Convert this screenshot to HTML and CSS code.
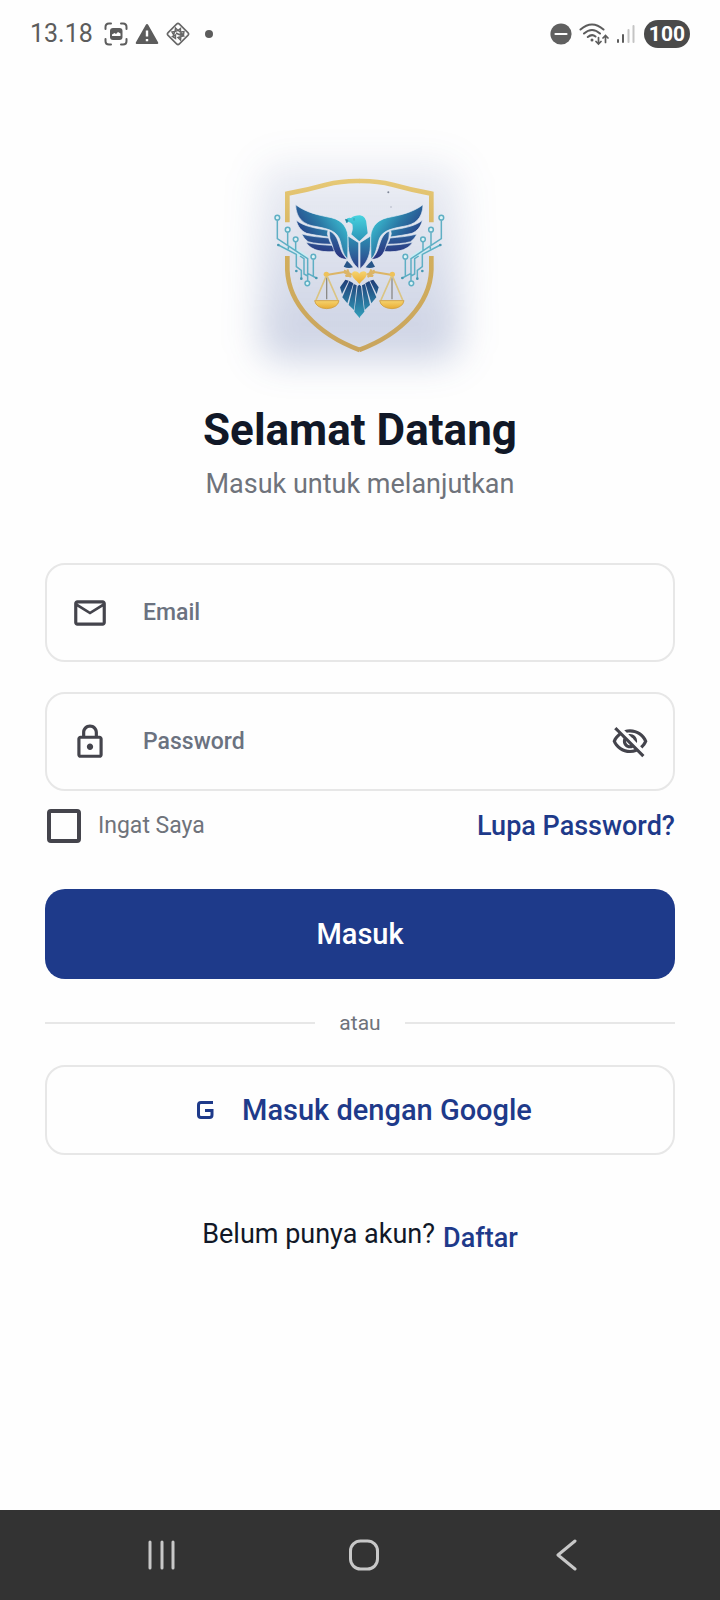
FILE: index.html
```html
<!DOCTYPE html>
<html lang="id">
<head>
<meta charset="utf-8">
<meta name="viewport" content="width=device-width, initial-scale=1">
<title>Masuk</title>
<link rel="stylesheet" href="styles.css">
</head>
<body>
<div class="screen">
  <header class="status">
    <div class="status-left">
      <span class="clock">13.18</span>
      <svg viewBox="0 0 24 24" width="24" height="24" fill="none" stroke="#5c5c5c" stroke-width="2" stroke-linecap="round"><path d="M1.500 7V5Q1.500 1.500 5 1.500H7M17 1.500H19Q22.500 1.500 22.500 5V7M22.500 17V19Q22.500 22.500 19 22.500H17M7 22.500H5Q1.500 22.500 1.500 19V17"/><rect x="6" y="6" width="12.500" height="12" rx="3" fill="#5c5c5c" stroke="none"/><path d="M8 14V12.500L10.500 11L12 12L14 10L16.500 11.500V14Z" fill="#fff" stroke="none"/></svg>
      <svg viewBox="0 0 24 24" width="24" height="24"><path d="M12 2Q12.800 2 13.300 3L23.200 20.500Q23.700 22 22 22H2Q.3 22 .8 20.500L10.700 3Q11.200 2 12 2Z" fill="#5c5c5c"/><path d="M12 8.500V14.500M12 17V19.200" stroke="#fff" stroke-width="2.400"/></svg>
      <svg viewBox="0 0 24 24" width="24" height="24" fill="none" stroke="#666"><rect x="4" y="4" width="16" height="16" rx="2" transform="rotate(45 12 12)" stroke-width="1.600"/><path d="M9.500 6L12 8.500L9 9.500ZM14.500 6.500V10L12 8.500ZM6 10L9 9.500L7.500 12.500ZM18 9.500L17.500 13L14.500 10ZM6.500 14.500L9.500 13L9.500 16.500ZM12 15.500L15 14.500L14.500 18ZM17.500 14L15 14.500L14.500 12ZM10 11L14 13" stroke-width="1.400"/></svg>
      <span class="dot"></span>
    </div>
    <div class="status-right">
      <svg viewBox="0 0 22 22" width="22" height="22"><circle cx="11" cy="11" r="10.600" fill="#606060"/><path d="M5.500 11H16.500" stroke="#fff" stroke-width="2.200" stroke-linecap="round"/></svg>
      <svg viewBox="0 0 30 24" width="30" height="24" fill="none" stroke="#5c5c5c" stroke-width="2" stroke-linecap="round"><path d="M1.500 7.500Q13 -2.500 24.500 7.500M5 11.500Q13 4.500 21 11.500M8.800 15Q13 11.500 16.500 14.500"/><circle cx="13" cy="18" r="1.500" fill="#5c5c5c" stroke="none"/><path d="M19.500 15.500V21.500M17 19.500L19.500 22L22 19.500M26.500 20.500V14M24 16L26.500 13.500L29 16" stroke-width="1.700"/></svg>
      <svg viewBox="0 0 19 20" width="19" height="20" stroke-width="2" stroke-linecap="round"><path d="M2 16V18M7 11V18" stroke="#5c5c5c"/><path d="M12.500 6V18M17.500 2V18" stroke="#c4c4c4"/></svg>
      <span class="battery">100</span>
    </div>
  </header>

  <main class="content">
    <svg class="logo" viewBox="0 0 840 780" role="img" aria-label="Logo">
      <defs>
        <filter id="soft" x="-50%" y="-50%" width="200%" height="200%" color-interpolation-filters="sRGB"><feGaussianBlur stdDeviation="56"/></filter>
        <linearGradient id="glow" x1="0" y1="0" x2="0" y2="1"><stop offset="0" stop-color="#1e3a8a" stop-opacity=".08"/><stop offset="1" stop-color="#1e3a8a" stop-opacity=".23"/></linearGradient>
        <linearGradient id="gold" gradientUnits="userSpaceOnUse" x1="0" y1="150" x2="0" y2="660"><stop offset="0" stop-color="#e6c875"/><stop offset=".45" stop-color="#d2ae5c"/><stop offset="1" stop-color="#c9a55e"/></linearGradient>
        <linearGradient id="wing" gradientUnits="userSpaceOnUse" x1="360" y1="260" x2="262" y2="330"><stop offset="0" stop-color="#39b7cd"/><stop offset=".5" stop-color="#2b78a5"/><stop offset="1" stop-color="#28488c"/></linearGradient>
        <linearGradient id="low" gradientUnits="userSpaceOnUse" x1="330" y1="290" x2="320" y2="370"><stop offset="0" stop-color="#2d74a6"/><stop offset="1" stop-color="#2b3a83"/></linearGradient>
        <linearGradient id="head" x1="0" y1="0" x2="0" y2="1"><stop offset="0" stop-color="#48d3df"/><stop offset="1" stop-color="#2a92b6"/></linearGradient>
        <linearGradient id="torso" x1="0" y1="0" x2="0" y2="1"><stop offset="0" stop-color="#2c8fb3"/><stop offset="1" stop-color="#2e3f88"/></linearGradient>
        <linearGradient id="tail" gradientUnits="userSpaceOnUse" x1="0" y1="450" x2="0" y2="560"><stop offset="0" stop-color="#1f3d77"/><stop offset="1" stop-color="#319bb8"/></linearGradient>
        <linearGradient id="yellow" x1="0" y1="0" x2="0" y2="1"><stop offset="0" stop-color="#f6d36e"/><stop offset="1" stop-color="#e8ac35"/></linearGradient>
      </defs>
      <rect x="120" y="100" width="600" height="590" rx="60" fill="url(#glow)" filter="url(#soft)"/>
      <g id="half">
        <path d="M202 277V191Q260 180 318 164Q366 152 419 153M202 378V420C206 520 290 612 419 660" fill="none" stroke="url(#gold)" stroke-width="14"/>
        <g stroke="#e4ecf5" stroke-width="2">
          <path d="M227 224C258 248 298 256 334 263C370 271 386 298 384 330L383 387C366 374 366 345 357 324C346 300 316 295 285 289C254 284 228 268 227 224Z" fill="url(#wing)"/>
          <path d="M229 271C252 290 290 295 324 301Q320 311 325 321C302 318 278 314 260 310C244 303 233 290 229 271Z" fill="url(#wing)"/>
          <path d="M245 312C272 320 300 321 326 324Q328 334 334 343C308 342 284 341 264 335Q252 327 245 312Z" fill="url(#low)"/>
          <path d="M258 337C284 343 310 345 335 346Q342 356 352 364C314 368 274 364 258 337Z" fill="url(#low)"/>
          <path d="M328 303C350 312 354 334 361 354C367 372 374 380 382 388C356 388 344 374 337 346Q326 324 328 303Z" fill="url(#low)"/>
          <path d="M384 318L416 338V416C400 404 386 380 385 350Z" fill="url(#torso)"/>
        </g>
        <path d="M371 410L381 392Q390 400 399 412Q385 417 371 410Z" fill="#285688"/>
        <g fill="url(#tail)">
          <path d="M419 464L413 468L403 545L419 564Z"/>
          <path d="M401 462L410 466L402 540L386 525Z"/>
          <path d="M388 453L400 460L382 520L367 502Z"/>
          <path d="M376 449L386 452L366 492L360 472Z"/>
        </g>
        <path d="M319 435L378 425M372 421L392 432L376 438M374 428L394 440M382 418L392 442" fill="none" stroke="#dcb566" stroke-width="6"/>
        <circle cx="319" cy="433" r="8" fill="#eec25a"/>
        <path d="M320 442V508" stroke="#8b8a88" stroke-width="4"/>
        <path d="M318 440L288 510M322 440L353 510" stroke="#dac483" stroke-width="5" fill="none"/>
        <path d="M284 512H357Q353 534 320 536Q288 534 284 512Z" fill="url(#yellow)" stroke="#d3a54a" stroke-width="3"/>
        <path d="M175 345L250 382M200 342L263 386M227 358L263 382" fill="none" stroke="#c9edf4" stroke-width="7"/>
        <g fill="none" stroke="#5fafc4" stroke-width="4.500">
          <path d="M172 271V326L263 386V453M203 307V346M227 336V362M175 345L229 373V410L244 421V445M240 378L252 386V432L263 438M280 388V438M263 430L289 444M205 350V358"/>
          <g fill="#def3f6"><circle cx="172" cy="263" r="7"/><circle cx="203" cy="299" r="7"/><circle cx="227" cy="328" r="7"/><circle cx="280" cy="380" r="7"/><circle cx="262" cy="460" r="7"/></g>
        </g>
        <g fill="#4798b2"><circle cx="175" cy="345" r="4"/><circle cx="229" cy="423" r="4"/><circle cx="244" cy="446" r="4"/><circle cx="289" cy="444" r="4"/></g>
      </g>
      <use href="#half" transform="translate(836 0) scale(-1 1)"/>
      <path d="M377 269Q384 261 393 264Q402 256 420 256Q440 259 440 286L443 310L418 334L394 313Q401 296 397 283Q391 276 383 275L378 279Z" fill="url(#head)"/>
      <path d="M376 268L384 270L381 278ZM402 264V272" fill="#2c7191" stroke="#2c8ba6" stroke-width="2"/>
      <path d="M418 462C408 449 396 443 396 432C397 421 411 422 418 431C425 422 439 421 440 432C440 443 428 449 418 462Z" fill="url(#yellow)"/>
      <circle cx="505" cy="187" r="3" fill="#7f8697"/><circle cx="513" cy="231" r="3" fill="#c5c9d5"/>
    </svg>

    <h1 class="title">Selamat Datang</h1>
    <p class="subtitle">Masuk untuk melanjutkan</p>

    <form class="form">
      <div class="field">
        <svg viewBox="0 0 24 24" width="38" height="38" fill="#44444c"><path d="M22 6c0-1.100-.9-2-2-2H4c-1.100 0-2 .9-2 2v12c0 1.100.9 2 2 2h16c1.100 0 2-.9 2-2V6zm-2 0l-8 5-8-5h16zm0 12H4V8l8 5 8-5v10z"/></svg>
        <input class="input" type="email" placeholder="Email" aria-label="Email">
      </div>
      <div class="field">
        <svg viewBox="0 0 24 24" width="38" height="38" fill="#44444c"><path d="M18 8h-1V6c0-2.760-2.240-5-5-5S7 3.240 7 6v2H6c-1.100 0-2 .9-2 2v10c0 1.100.9 2 2 2h12c1.100 0 2-.9 2-2V10c0-1.100-.9-2-2-2zM9 6c0-1.660 1.340-3 3-3s3 1.340 3 3v2H9V6zm9 14H6V10h12v10zm-6-3c1.100 0 2-.9 2-2s-.9-2-2-2-2 .9-2 2 .9 2 2 2z"/></svg>
        <input class="input" type="password" placeholder="Password" aria-label="Password">
        <button class="eye" type="button" aria-label="Tampilkan password">
          <svg viewBox="0 0 24 24" width="38" height="38" fill="#44444c"><path d="M12 6c3.790 0 7.170 2.130 8.820 5.500-.59 1.220-1.420 2.270-2.410 3.120l1.410 1.410c1.390-1.230 2.490-2.770 3.180-4.530C21.270 7.110 17 4 12 4c-1.270 0-2.490.2-3.640.57l1.650 1.650C10.660 6.090 11.320 6 12 6zm-1.070 1.140L13 9.210c.57.25 1.030.71 1.280 1.280l2.070 2.070c.08-.34.14-.7.140-1.070C16.500 9.010 14.480 7 12 7c-.37 0-.72.050-1.070.14zM2.010 3.870l2.680 2.680C3.060 7.830 1.770 9.530 1 11.500 2.730 15.890 7 19 12 19c1.520 0 2.980-.29 4.320-.82l3.420 3.420 1.410-1.410L3.420 2.450 2.010 3.870zm7.500 7.500l2.610 2.610c-.04.010-.08.020-.12.020-1.380 0-2.500-1.120-2.500-2.500 0-.05.010-.08.010-.13zm-3.400-3.400l1.750 1.750c-.23.550-.36 1.150-.36 1.780 0 2.480 2.020 4.500 4.500 4.500.63 0 1.230-.13 1.770-.36l.98.98c-.88.240-1.800.380-2.750.380-3.790 0-7.170-2.130-8.820-5.500.700-1.430 1.720-2.610 2.930-3.530z"/></svg>
        </button>
      </div>
      <div class="options">
        <label class="remember"><input class="check" type="checkbox"><span>Ingat Saya</span></label>
        <a class="link" href="#">Lupa Password?</a>
      </div>
      <button class="btn primary" type="submit">Masuk</button>
      <div class="divider"><span>atau</span></div>
      <button class="btn google" type="button">
        <svg viewBox="-9 0 34 18" width="34" height="18" fill="none" stroke="#1e3a8a" stroke-width="3"><path d="M16 1.500H4Q1.500 1.500 1.500 4V14Q1.500 16.500 4 16.500H12.500Q15 16.500 15 14V9.500H8"/></svg>
        <span>Masuk dengan Google</span>
      </button>
    </form>
    <p class="signup"><span>Belum punya akun?</span><a class="link signup-link" href="#">Daftar</a></p>
  </main>

  <nav class="navbar" aria-label="Navigasi sistem">
    <button class="nav-btn" type="button" aria-label="Terbaru"><svg viewBox="0 0 32 32" width="32" height="32"><path d="M4 3V29M16 3V29M27 3V29"/></svg></button>
    <button class="nav-btn" type="button" aria-label="Beranda"><svg viewBox="0 0 32 32" width="32" height="32"><rect x="2.500" y="2" width="27" height="28" rx="10"/></svg></button>
    <button class="nav-btn" type="button" aria-label="Kembali"><svg viewBox="0 0 32 32" width="32" height="32"><path d="M25 2L8 16L25 30"/></svg></button>
  </nav>
</div>
</body>
</html>
```
FILE: styles.css
```css
* { box-sizing: border-box; }
body {
  margin: 0;
  background: #fefefe;
  color: #111827;
  font-family: Roboto, "Liberation Sans", sans-serif;
}
button, input { font: inherit; }
button { border: 0; background: none; padding: 0; cursor: pointer; }
svg { flex: none; display: block; }

.screen { min-height: 100vh; display: flex; flex-direction: column; }

.status {
  height: 68px;
  padding: 0 30px;
  display: flex;
  align-items: center;
  justify-content: space-between;
}
.status-left, .status-right { display: flex; align-items: center; gap: 7px; }
.clock { font-size: 25px; line-height: 32px; color: #5c5c5c; margin-right: 4px; }
.dot { width: 8px; height: 8px; border-radius: 50%; background: #5c5c5c; margin-left: 8px; }
.battery {
  margin-left: 2px;
  padding: 0 5px;
  border-radius: 14px;
  background: #4a4a4a;
  color: #fff;
  font-size: 21px;
  font-weight: 700;
  line-height: 28px;
}

.content { flex: 1; padding: 62px 45px 0; }
.logo { width: 280px; height: 260px; margin: 0 auto; overflow: visible; }
.title {
  margin: 13px 0 0;
  text-align: center;
  font-size: 44px;
  line-height: 54px;
  font-weight: 700;
}
.subtitle {
  margin: 11px 0 0;
  text-align: center;
  font-size: 27px;
  line-height: 32px;
  color: #6f737b;
}

.form { margin-top: 63px; }
.field {
  height: 99px;
  padding: 0 24px;
  display: flex;
  align-items: center;
  gap: 34px;
  border: 2px solid #e7e7e7;
  border-radius: 20px;
}
.field + .field { margin-top: 30px; }
.input {
  flex: 1;
  min-width: 0;
  height: 60px;
  padding: 0;
  border: 0;
  outline: 0;
  background: none;
  color: #111827;
  font-size: 23px;
  font-weight: 500;
}
.input::placeholder { color: #6b7280; opacity: 1; }
.eye { flex: none; }

.options {
  margin-top: 16px;
  display: flex;
  align-items: center;
  justify-content: space-between;
}
.remember {
  display: flex;
  align-items: center;
  gap: 17px;
  color: #6f737b;
  font-size: 23px;
  line-height: 38px;
}
.check {
  appearance: none;
  width: 34px;
  height: 34px;
  margin: 0 0 0 2px;
  border: 4px solid #44444c;
  border-radius: 4px;
}
.check:checked { background: #1e3a8a; }
.link {
  color: #1e3a8a;
  text-decoration: none;
  font-size: 27px;
  line-height: 32px;
  font-weight: 500;
}

.btn {
  width: 100%;
  height: 90px;
  display: flex;
  align-items: center;
  justify-content: center;
  border-radius: 20px;
  font-size: 29px;
  font-weight: 500;
}
.primary { margin-top: 44px; background: #1e3a8a; color: #fff; }
.google { gap: 20px; margin-top: 27px; border: 2px solid #e7e7e7; color: #1e3a8a; }
.divider {
  margin-top: 29px;
  display: flex;
  align-items: center;
  gap: 24px;
  color: #6f737b;
  font-size: 21px;
  line-height: 30px;
}
.divider::before, .divider::after { content: ""; flex: 1; height: 2px; background: #e7e7e7; }

.signup {
  margin: 59px 0 0;
  display: flex;
  align-items: center;
  justify-content: center;
  gap: 8px;
  font-size: 27px;
  line-height: 32px;
}
.signup-link { padding-top: 8px; }

.navbar {
  height: 90px;
  padding: 0 53px 0 61px;
  display: flex;
  align-items: center;
  background: #333;
}
.nav-btn { flex: 1; display: flex; justify-content: center; }
.nav-btn svg { fill: none; stroke: #c8c8c8; stroke-width: 3; stroke-linecap: round; stroke-linejoin: round; }
```
